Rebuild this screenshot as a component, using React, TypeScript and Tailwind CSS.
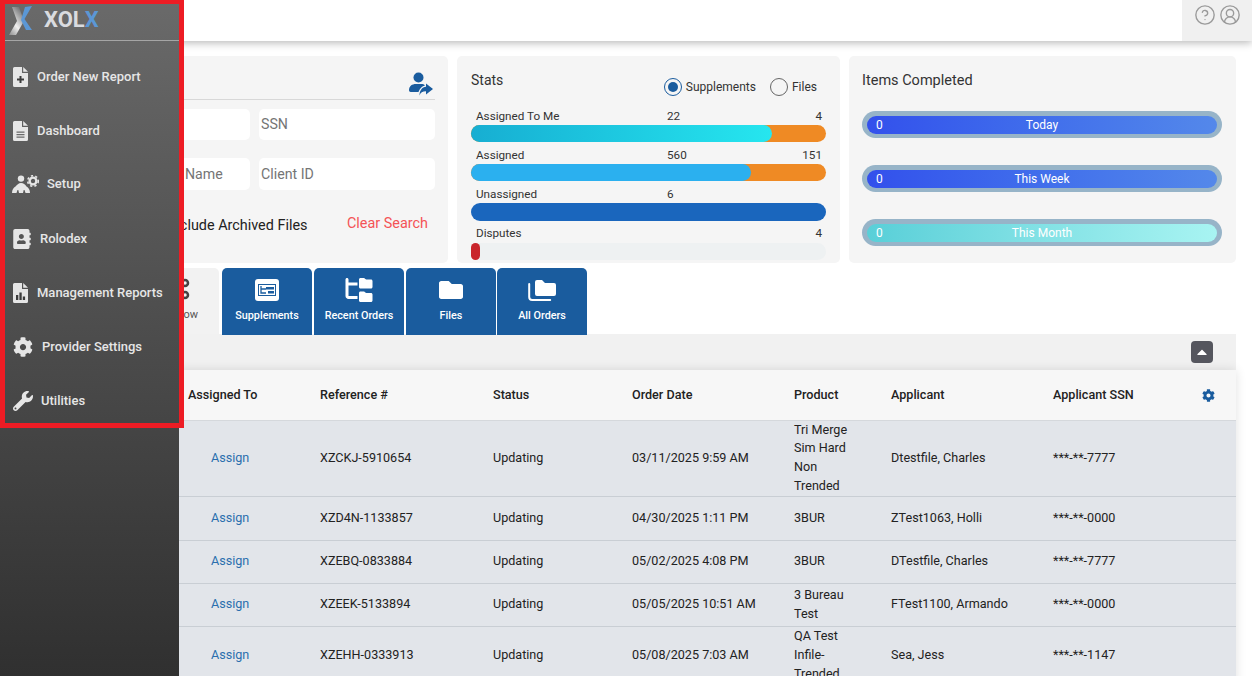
import { CircleHelp, CircleUserRound } from "lucide-react";
import type { ReactNode } from "react";
import { FaAddressBook, FaCaretUp, FaCog, FaFolder, FaWrench } from "react-icons/fa";
import { FaFolderTree } from "react-icons/fa6";

const FileIcon = ({ children }: { children: ReactNode }) => (
  <svg viewBox="0 0 15 20" className="h-[20px] w-[15px] text-[#e6e6e6]" fill="currentColor">
    <path d="M1.500 0H9v5.500a.5.500 0 0 0 .5.5H15v12.500a1.500 1.500 0 0 1-1.500 1.500h-12A1.500 1.500 0 0 1 0 18.500v-17A1.500 1.500 0 0 1 1.500 0z" />
    <path d="M10.200 0L15 4.800h-4.800z" />
    {children}
  </svg>
);

const SetupIcon = () => (
  <svg viewBox="0 0 27 18" className="h-[18px] w-[27px] text-[#e6e6e6]" fill="currentColor">
    <circle cx="9" cy="3.600" r="3.200" />
    <path d="M0 18c0-3 1.500-5.500 3.500-6.500C5 10 6.500 8 9 8c2.500 0 4 1.500 5.500 3.500C16.500 12.500 18 15 18 18h-4.500l-1-3h-.8l-.7 3H7l-.7-3h-.8l-1 3z" />
    <circle cx="21" cy="6" r="3.400" fill="none" stroke="currentColor" strokeWidth="2.400" />
    <circle cx="21" cy="6" r="5.300" fill="none" stroke="currentColor" strokeWidth="1.600" strokeDasharray="2.2 2.24" />
  </svg>
);

const navItems: { label: string; icon: ReactNode; cls: string }[] = [
  {
    label: "Order New Report",
    icon: (
      <FileIcon>
        <path d="M6.500 9h2v2.500H11v2H8.500V16h-2v-2.500H4v-2h2.500z" fill="#3d3d3d" />
      </FileIcon>
    ),
    cls: "pl-[13px] gap-[9px] h-[54px]",
  },
  {
    label: "Dashboard",
    icon: (
      <FileIcon>
        <path d="M3.500 10.500h8v1.200h-8zM3.500 13h8v1.200h-8zM3.500 15.500h8v1.200h-8z" fill="#6a6a6a" />
      </FileIcon>
    ),
    cls: "pl-[13px] gap-[9px] h-[53px]",
  },
  { label: "Setup", icon: <SetupIcon />, cls: "pl-[12px] gap-[8px] h-[55px] pb-[2px]" },
  { label: "Rolodex", icon: <FaAddressBook className="h-[20px] w-[18px]" />, cls: "pl-[13px] gap-[9px] h-[54px]" },
  {
    label: "Management Reports",
    icon: (
      <FileIcon>
        <path d="M3 12h2.300v5H3zM6.400 9.500h2.300V17H6.400zM9.800 13.500h2.300V17H9.800z" fill="#3d3d3d" />
      </FileIcon>
    ),
    cls: "pl-[13px] gap-[9px] h-[54px]",
  },
  { label: "Provider Settings", icon: <FaCog className="h-[20px] w-[20px]" />, cls: "pl-[13px] gap-[9px] h-[54px]" },
  { label: "Utilities", icon: <FaWrench className="h-[20px] w-[20px]" />, cls: "pl-[13px] gap-[8px] h-[54px]" },
];

const rows = [
  { ref: "XZCKJ-5910654", date: "03/11/2025 9:59 AM", product: ["Tri Merge", "Sim Hard", "Non", "Trended"], applicant: "Dtestfile, Charles", ssn: "***-**-7777", h: "h-[75px]" },
  { ref: "XZD4N-1133857", date: "04/30/2025 1:11 PM", product: ["3BUR"], applicant: "ZTest1063, Holli", ssn: "***-**-0000", h: "h-[44px]" },
  { ref: "XZEBQ-0833884", date: "05/02/2025 4:08 PM", product: ["3BUR"], applicant: "DTestfile, Charles", ssn: "***-**-7777", h: "h-[43px]" },
  { ref: "XZEEK-5133894", date: "05/05/2025 10:51 AM", product: ["3 Bureau", "Test"], applicant: "FTest1100, Armando", ssn: "***-**-0000", h: "h-[43px]" },
  { ref: "XZEHH-0333913", date: "05/08/2025 7:03 AM", product: ["QA Test", "Infile-", "Trended"], applicant: "Sea, Jess", ssn: "***-**-1147", h: "h-[59px]" },
];

const Logo = () => (
  <svg viewBox="0 0 24 30" className="h-[30px] w-[24px]">
    <defs>
      <linearGradient id="logoLeft" x1="0" y1="1" x2="0.6" y2="0">
        <stop offset="0" stopColor="#8c8c8c" />
        <stop offset="0.45" stopColor="#f0f0f0" />
        <stop offset="1" stopColor="#77787a" />
      </linearGradient>
    </defs>
    <polygon points="3,1 10,1 15,15 7,29 0,29 8,15" fill="url(#logoLeft)" />
    <polygon points="16,1 23,0 15.500,13 23,24 17,24 12,14" fill="#5b97d5" />
  </svg>
);

const SupplementIcon = () => (
  <svg viewBox="0 0 24 22" className="h-[22px] w-[24px]">
    <rect width="24" height="22" rx="3" fill="#fff" />
    <rect x="3" y="5" width="18" height="12" fill="#1a5c9e" />
    <rect x="4" y="6" width="16" height="10" fill="#fff" />
    <path d="M6 7v7h5M6 10h5" stroke="#1a5c9e" strokeWidth="1.300" fill="none" />
    <rect x="11" y="8" width="8" height="2.500" fill="#1a5c9e" />
    <rect x="13" y="12" width="6" height="2.500" fill="#1a5c9e" />
  </svg>
);

const AllOrdersIcon = () => (
  <svg viewBox="0 0 28 22" className="h-[22px] w-[28px]">
    <path d="M7 3a2 2 0 0 1 2-2h5l3 3h9a2 2 0 0 1 2 2v9a2 2 0 0 1-2 2H9a2 2 0 0 1-2-2z" fill="#fff" />
    <path d="M1.200 5v13a3 3 0 0 0 3 3h18" stroke="#fff" strokeWidth="2" fill="none" strokeLinecap="round" />
  </svg>
);

const UserShareIcon = () => (
  <svg viewBox="0 0 24 24" className="h-[24px] w-[24px]" fill="#1a5c9e">
    <circle cx="9.500" cy="5.500" r="5" />
    <path d="M0 18.500C0 14 3 12 7 12h5c2 0 3 .5 4 1.400-3 .6-5.500 3-6.500 6.600H2a2 2 0 0 1-2-1.500z" />
    <path d="M17 11.500l7 5.500-7 5.500v-3.200c-3.500 0-5.500 1.200-6.500 4.200 0-5 2.500-8.500 6.500-8.800z" />
  </svg>
);

const Tab = ({ icon, label, cls }: { icon: ReactNode; label: string; cls?: string }) => (
  <div className={`flex h-[67px] w-[90px] flex-col items-center rounded-t-[5px] bg-[#1a5c9e] pt-[9px] ${cls ?? ""}`}>
    <div className="flex h-[26px] items-center">{icon}</div>
    <span className="mt-[6px] text-[10.8px] font-medium leading-[14px] text-white">{label}</span>
  </div>
);

const StatBar = ({
  label,
  mid,
  end,
  cls,
  children,
}: {
  label: string;
  mid?: string;
  end?: string;
  cls?: string;
  children: ReactNode;
}) => (
  <div>
    <div className={`flex h-[22px] items-end pl-[5px] pr-[4px] text-[11.7px] leading-[16px] text-[#333] ${cls ?? "pb-[1px]"}`}>
      <span className="w-[191px]">{label}</span>
      <span>{mid}</span>
      <span className="ml-auto">{end}</span>
    </div>
    {children}
  </div>
);

const Pill = ({ label, cls }: { label: string; cls: string }) => (
  <div className="rounded-full bg-[#97b4c8] px-[5px] pb-[4px] pt-[5px]">
    <div className={`relative flex h-[18px] items-center justify-center rounded-full text-[12px] text-white ${cls}`}>
      <span className="absolute left-[9px]">0</span>
      {label}
    </div>
  </div>
);

const App = () => {
  return (
    <div className="relative flex h-[676px] w-[1252px] overflow-hidden bg-white [font-family:Roboto,sans-serif]">
      <aside className="z-10 h-full w-[179px] shrink-0 bg-gradient-to-b from-[#6a6a6a] to-[#303030]">
        <div className="flex h-[41px] items-center gap-[11px] border-b border-[#a5a5a5] pl-[9px] pt-[2px]">
          <Logo />
          <span className="mt-[-3px] text-[22px] font-bold leading-none text-[#d9dbdf]">
            XOL<span className="text-[#5b97d5]">X</span>
          </span>
        </div>
        <nav className="pt-[9px]">
          {navItems.map((i) => (
            <div key={i.label} className={`flex items-center text-[13px] font-medium text-[#e6e6e6] ${i.cls}`}>
              {i.icon}
              <span>{i.label}</span>
            </div>
          ))}
        </nav>
      </aside>

      <main className="min-w-0 flex-1">
        <header className="relative z-[1] flex h-[41px] justify-end bg-white shadow-[0_2px_8px_rgba(0,0,0,0.28)]">
          <div className="flex w-[70px] items-start gap-[3px] bg-[#f0f0f0] pl-[12px] pt-[4px] text-[#9a9a9a]">
            <CircleHelp className="h-[22px] w-[22px]" strokeWidth={1.5} />
            <CircleUserRound className="h-[22px] w-[22px]" strokeWidth={1.5} />
          </div>
        </header>

        <div className="pr-[16px] pt-[15px]">
          <div className="flex gap-[9px]">
            <section className="h-[207px] w-[269px] shrink-0 overflow-hidden rounded-r-[5px] bg-[#f5f5f5] pr-[13px]">
              <div className="flex h-[44px] justify-end border-b border-[#d8d8d8] pr-[2px] pt-[16px]">
                <UserShareIcon />
              </div>
              <div className="mt-[9px] grid grid-cols-[71px_176px] gap-x-[9px] gap-y-[18px] text-[14.2px] text-[#757575]">
                <div className="h-[31px] rounded-r-[5px] bg-white" />
                <div className="flex h-[31px] items-center rounded-[5px] bg-white pl-[2px]">SSN</div>
                <div className="flex h-[32px] items-center rounded-r-[5px] bg-white pl-[6px] pt-[1px]">Name</div>
                <div className="flex h-[32px] items-center rounded-[5px] bg-white pl-[2px] pt-[1px]">Client ID</div>
              </div>
              <div className="mt-[23px] flex items-start">
                <span className="ml-[-11px] w-[179px] whitespace-nowrap pt-[2px] text-[14.4px] text-[#222]">Include Archived Files</span>
                <span className="whitespace-nowrap text-[14.4px] text-[#f45356]">Clear Search</span>
              </div>
            </section>

            <section className="h-[207px] w-[383px] shrink-0 rounded-[5px] bg-[#f5f5f5] px-[14px]">
              <div className="flex h-[47px] items-start">
                <span className="pt-[14px] text-[14px] text-[#333]">Stats</span>
                <div className="ml-auto mr-[9px] flex items-center pt-[22px] text-[12px] text-[#333]">
                  <span className="flex h-[18px] w-[18px] items-center justify-center rounded-full border border-[#1a5c9e]">
                    <span className="h-[10px] w-[10px] rounded-full bg-[#1a5c9e]" />
                  </span>
                  <span className="ml-[4px]">Supplements</span>
                  <span className="ml-[14px] h-[18px] w-[18px] rounded-full border border-[#666]" />
                  <span className="ml-[4px]">Files</span>
                </div>
              </div>
              <StatBar label="Assigned To Me" mid="22" end="4">
                <div className="h-[17px] rounded-full bg-[#ef8a24]">
                  <div className="h-full w-[301px] rounded-full bg-gradient-to-r from-[#17aed2] to-[#26e6ef]" />
                </div>
              </StatBar>
              <StatBar label="Assigned" mid="560" end="151">
                <div className="h-[17px] rounded-full bg-[#ef8a24]">
                  <div className="h-full w-[280px] rounded-full bg-[#2bb0ef]" />
                </div>
              </StatBar>
              <StatBar label="Unassigned" mid="6">
                <div className="h-[18px] rounded-full bg-[#1a66bd]" />
              </StatBar>
              <StatBar label="Disputes" end="4" cls="pb-[2px]">
                <div className="h-[17px] rounded-full bg-[#eef1f2]">
                  <div className="h-full w-[9px] rounded-full bg-[#c9252b]" />
                </div>
              </StatBar>
            </section>

            <section className="h-[207px] flex-1 rounded-[5px] bg-[#f5f5f5] px-[13px]">
              <div className="pt-[14px] text-[14.5px] text-[#333]">Items Completed</div>
              <div className="mt-[19px] flex flex-col gap-[27px] pr-[1px]">
                <Pill label="Today" cls="bg-gradient-to-r from-[#3350ec] to-[#5488ea]" />
                <Pill label="This Week" cls="bg-gradient-to-r from-[#3350ec] to-[#5488ea]" />
                <Pill label="This Month" cls="bg-gradient-to-r from-[#58cfd8] to-[#a8f4f2]" />
              </div>
            </section>
          </div>

          <div className="mt-[5px] flex h-[66px] gap-[2px] overflow-visible">
            <div className="mr-[1px] flex h-[66px] w-[40px] flex-col rounded-tr-[5px] bg-[#f2f2f2] pl-[1px] pt-[10px]">
              <svg viewBox="0 0 10 22" className="h-[22px] w-[10px]" fill="none" stroke="#444" strokeWidth="2.5">
                <circle cx="5" cy="5" r="3" />
                <circle cx="5" cy="17" r="3" />
              </svg>
              <span className="mt-[8px] text-right text-[11px] leading-[14px] text-[#555]">
                <span className="mr-[21px]">ow</span>
              </span>
            </div>
            <Tab icon={<SupplementIcon />} label="Supplements" />
            <Tab icon={<FaFolderTree className="h-[24px] w-[28px] text-white" />} label="Recent Orders" />
            <Tab icon={<FaFolder className="h-[24px] w-[26px] text-white" />} label="Files" cls="mr-[-1px]" />
            <Tab icon={<AllOrdersIcon />} label="All Orders" />
          </div>

          <div className="flex h-[36px] items-center justify-end bg-[#f1f1f1] pr-[23px]">
            <span className="flex h-[22px] w-[22px] items-center justify-center rounded-[4px] bg-[#55565e]">
              <FaCaretUp className="h-[16px] w-[16px] text-white" />
            </span>
          </div>

          <div className="shadow-[0_0_10px_rgba(0,0,0,0.12)]">
            <table className="w-full table-fixed border-collapse text-left text-[12.6px] leading-[18.75px] text-[#222]">
              <colgroup>
                <col className="w-[141px]" />
                <col className="w-[173px]" />
                <col className="w-[139px]" />
                <col className="w-[162px]" />
                <col className="w-[97px]" />
                <col className="w-[162px]" />
                <col />
              </colgroup>
              <thead>
                <tr className="h-[50px] border-b border-[#d5d8dc] bg-[#f7f7f7] [&>th]:pt-[2px]">
                  <th className="pl-[9px] font-medium">Assigned To</th>
                  <th className="font-medium">Reference #</th>
                  <th className="font-medium">Status</th>
                  <th className="font-medium">Order Date</th>
                  <th className="font-medium">Product</th>
                  <th className="font-medium">Applicant</th>
                  <th className="font-medium">
                    <div className="flex items-center">
                      <span className="w-[149px]">Applicant SSN</span>
                      <FaCog className="h-[13px] w-[13px] text-[#1a5c9e]" />
                    </div>
                  </th>
                </tr>
              </thead>
              <tbody>
                {rows.map((r) => (
                  <tr key={r.ref} className={`border-b border-[#c9ced4] bg-[#e2e5ea] ${r.h}`}>
                    <td className="pl-[32px] text-[#2a6fae]">Assign</td>
                    <td>{r.ref}</td>
                    <td>Updating</td>
                    <td>{r.date}</td>
                    <td>
                      {r.product.map((p) => (
                        <div key={p}>{p}</div>
                      ))}
                    </td>
                    <td>{r.applicant}</td>
                    <td>{r.ssn}</td>
                  </tr>
                ))}
              </tbody>
            </table>
          </div>
        </div>
      </main>

      <div className="pointer-events-none absolute left-0 top-0 z-20 h-[428px] w-[184px] border-x-[5px] border-y-[4px] border-b-[5px] border-[#ed1c24]" />
    </div>
  );
};

export default App;
